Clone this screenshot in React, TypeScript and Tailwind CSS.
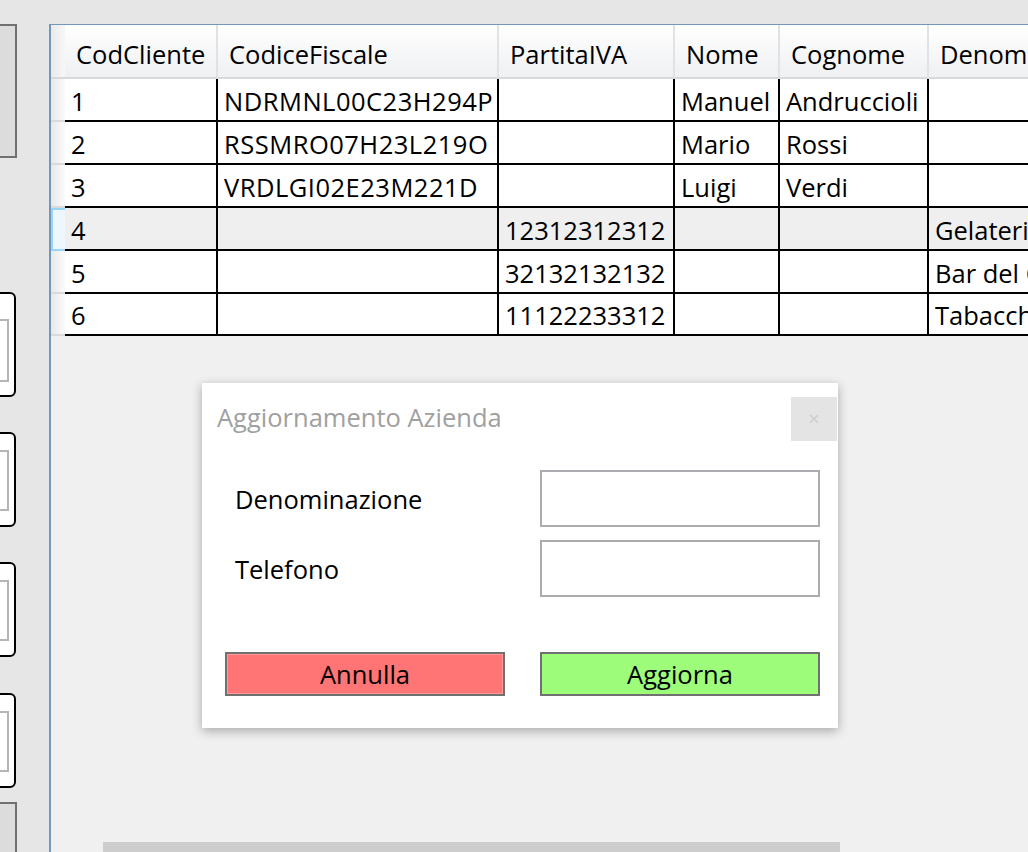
import React from "react";

const font = "font-['Open_Sans','Noto_Sans',sans-serif]";

const columns = [
  { title: "CodCliente", w: "w-[153px]" },
  { title: "CodiceFiscale", w: "w-[281px]" },
  { title: "PartitaIVA", w: "w-[176px]" },
  { title: "Nome", w: "w-[105px]" },
  { title: "Cognome", w: "w-[149px]" },
  { title: "Denominazione", w: "w-[300px]" },
];

const rowHeights = ["h-[42.5px]", "h-[43px]", "h-[43px]", "h-[43px]", "h-[43px]", "h-[42.5px]"];

const rows = [
  ["1", "NDRMNL00C23H294P", "", "Manuel", "Andruccioli", ""],
  ["2", "RSSMRO07H23L219O", "", "Mario", "Rossi", ""],
  ["3", "VRDLGI02E23M221D", "", "Luigi", "Verdi", ""],
  ["4", "", "12312312312", "", "", "Gelateria Rossi"],
  ["5", "", "32132132132", "", "", "Bar del Corso"],
  ["6", "", "11122233312", "", "", "Tabaccheria"],
];

// textbox cut off by the left edge of the window
const FieldBox: React.FC<{ className: string }> = ({ className }) => (
  <div className={`-ml-[15px] w-[31px] flex-none rounded-[6px] border-2 border-black bg-white pr-[5px] ${className}`}>
    <div className="h-full border-2 border-[#b5b5b5] bg-white" />
  </div>
);

const Grid: React.FC = () => (
  <div className="flex flex-col flex-none">
    {/* header */}
    <div className="flex h-[54px] flex-none">
      <div className="w-[14px] flex-none border-b-2 border-[#d9d9d9] bg-gradient-to-r from-[#e9e9e9] to-[#f7f7f7]" />
      {columns.map((c) => (
        <div
          key={c.title}
          className={`${c.w} flex-none flex items-center pt-[5px] pl-[11px] border-r-2 border-b-2 border-r-[#e1e2e4] border-b-[#d9d9d9] bg-gradient-to-b from-white to-[#eff0f2] text-black whitespace-nowrap overflow-hidden`}
        >
          {c.title}
        </div>
      ))}
    </div>
    {/* rows */}
    {rows.map((r, i) => {
      const sel = i === 3;
      return (
        <div key={i} className={`flex flex-none ${rowHeights[i]}`}>
          <div
            className={`w-[14px] flex-none border-b-2 ${
              sel
                ? "border-2 border-r-0 border-[#9ad3f8] bg-[#eef7fd]"
                : "border-[#dadada] bg-gradient-to-r from-[#e8e8e8] to-[#fbfbfb]"
            }`}
          />
          {r.map((v, j) => (
            <div
              key={j}
              className={`${columns[j].w} flex-none flex items-center pt-[3px] pl-[6px] border-r-2 border-b-2 border-black whitespace-nowrap overflow-hidden ${
                j === 1 ? "tracking-[0.5px]" : ""
              } ${sel ? "bg-[#efefef]" : "bg-white"}`}
            >
              {v}
            </div>
          ))}
        </div>
      );
    })}
  </div>
);

const Dialog: React.FC = () => (
  <div className="absolute left-[151px] top-[358px] w-[636px] h-[345px] bg-white shadow-[0_3px_10px_rgba(0,0,0,0.3)] flex flex-col">
    <div className="flex items-center justify-between mt-[14px] h-[44px]">
      <span className="pl-[15px] pb-[5px] text-[#a0a0a0]">Aggiornamento Azienda</span>
      <button className="mr-[1px] w-[46px] h-[44px] bg-[#e4e4e4] text-[#cdcdcd] text-[20px] leading-none flex items-center justify-center">
        ×
      </button>
    </div>
    <div className="flex flex-col gap-[13px] mt-[29px] pl-[33px]">
      <div className="flex items-center">
        <span className="w-[305px] text-black">Denominazione</span>
        <div className="w-[280px] h-[57px] border-2 border-[#abacb0] bg-white" />
      </div>
      <div className="flex items-center">
        <span className="w-[305px] text-black">Telefono</span>
        <div className="w-[280px] h-[57px] border-2 border-[#abacb0] bg-white" />
      </div>
    </div>
    <div className="flex gap-[35px] mt-[55px] pl-[23px]">
      <button className="w-[280px] h-[44px] border-2 border-[#707070] bg-[#ff7575] shadow-[inset_0_0_0_1px_#ff9a9a] text-black">
        Annulla
      </button>
      <button className="w-[280px] h-[44px] border-2 border-[#707070] bg-[#9dfd7a] text-black">
        Aggiorna
      </button>
    </div>
  </div>
);

export default function App() {
  return (
    <div className={`w-[1028px] h-[852px] overflow-hidden bg-[#e6e6e6] flex text-[25.5px] leading-[34px] ${font}`}>
      {/* left strip of cut-off controls */}
      <div className="w-[49px] flex-none flex flex-col">
        <div className="mt-[24px] h-[134px] w-[17px] flex-none border-y-2 border-r-2 border-[#707070] bg-[#dcdcdc]" />
        <FieldBox className="mt-[134px] h-[105px] pt-[25px] pb-[13px]" />
        <FieldBox className="mt-[35px] h-[95px] pt-[16px] pb-[14px]" />
        <FieldBox className="mt-[35px] h-[95px] pt-[16px] pb-[14px]" />
        <FieldBox className="mt-[36px] h-[95px] pt-[16px] pb-[14px]" />
        <div className="mt-[14px] w-[17px] flex-1 border-t-2 border-r-2 border-[#707070] bg-[#dcdcdc]" />
      </div>

      {/* grid panel */}
      <div className="relative mt-[24px] flex-1 min-w-0 flex flex-col overflow-hidden border-l-2 border-t border-[#7396bb] bg-[#f0f0f0]">
        <Grid />
        <div className="flex-1" />
        <div className="ml-[52px] w-[737px] h-[10px] flex-none bg-[#cdcdcd]" />
        <Dialog />
      </div>
    </div>
  );
}
